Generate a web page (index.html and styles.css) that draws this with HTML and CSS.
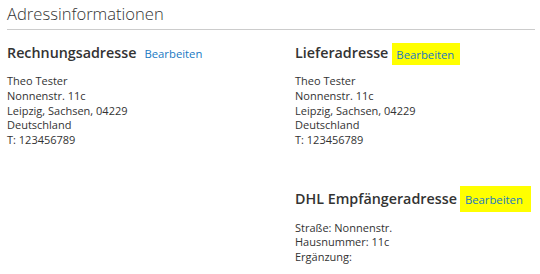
FILE: index.html
```html
<!DOCTYPE html>
<html lang="de">
<head>
<meta charset="utf-8">
<title>Adressinformationen</title>
<link rel="stylesheet" href="styles.css">
</head>
<body>
<div class="page">
  <h2 class="title">Adressinformationen</h2>
  <div class="grid">
    <section class="box">
      <h3 class="box-head">Rechnungsadresse<a class="edit" href="#">Bearbeiten</a></h3>
      <address class="addr">Theo Tester<br>Nonnenstr. 11c<br>Leipzig, Sachsen, 04229<br>Deutschland<br>T: 123456789</address>
    </section>
    <section class="box">
      <h3 class="box-head">Lieferadresse<a class="edit hl hl-a" href="#">Bearbeiten</a></h3>
      <address class="addr">Theo Tester<br>Nonnenstr. 11c<br>Leipzig, Sachsen, 04229<br>Deutschland<br>T: 123456789</address>
    </section>
    <section class="box box-dhl">
      <h3 class="box-head">DHL Empfängeradresse<a class="edit hl hl-b" href="#">Bearbeiten</a></h3>
      <div class="addr addr-dhl">Straße: Nonnenstr.<br>Hausnummer: 11c<br>Ergänzung:</div>
    </section>
  </div>
</div>
</body>
</html>
```

FILE: styles.css
```css
html, body {
  margin: 0;
  padding: 0;
  background: #fff;
}
body {
  font-family: "Open Sans", "Liberation Sans", sans-serif;
  color: #333;
}
.page {
  padding: 0 5px 0 7px;
}
.title {
  margin: 0;
  padding: 2px 0 3px;
  font-size: 16.6px;
  line-height: 24px;
  font-weight: 300;
  color: #333;
  border-bottom: 1px solid #ccc;
}
.grid {
  display: grid;
  grid-template-columns: 288px 1fr;
  padding-top: 13px;
}
.box-dhl {
  grid-column: 2;
  margin-top: 41px;
}
.box-head {
  margin: 0;
  font-size: 14.3px;
  font-weight: 600;
  line-height: 20px;
  color: #333;
}
.edit {
  margin-left: 8px;
  font-size: 11.3px;
  font-weight: 400;
  line-height: 11px;
  color: #1979c3;
  text-decoration: none;
}
.hl {
  background: #ffff00;
}
.hl-a {
  padding: 3.5px 6px 4px 4px;
  margin-left: 4px;
}
.hl-b {
  padding: 5.5px 8px 5px 5px;
  margin-left: 3px;
}
.addr {
  margin-top: 11px;
  font-style: normal;
  font-size: 11px;
  line-height: 14.8px;
  color: #333;
}
.addr-dhl {
  line-height: 14.3px;
  margin-top: 12px;
}
```
